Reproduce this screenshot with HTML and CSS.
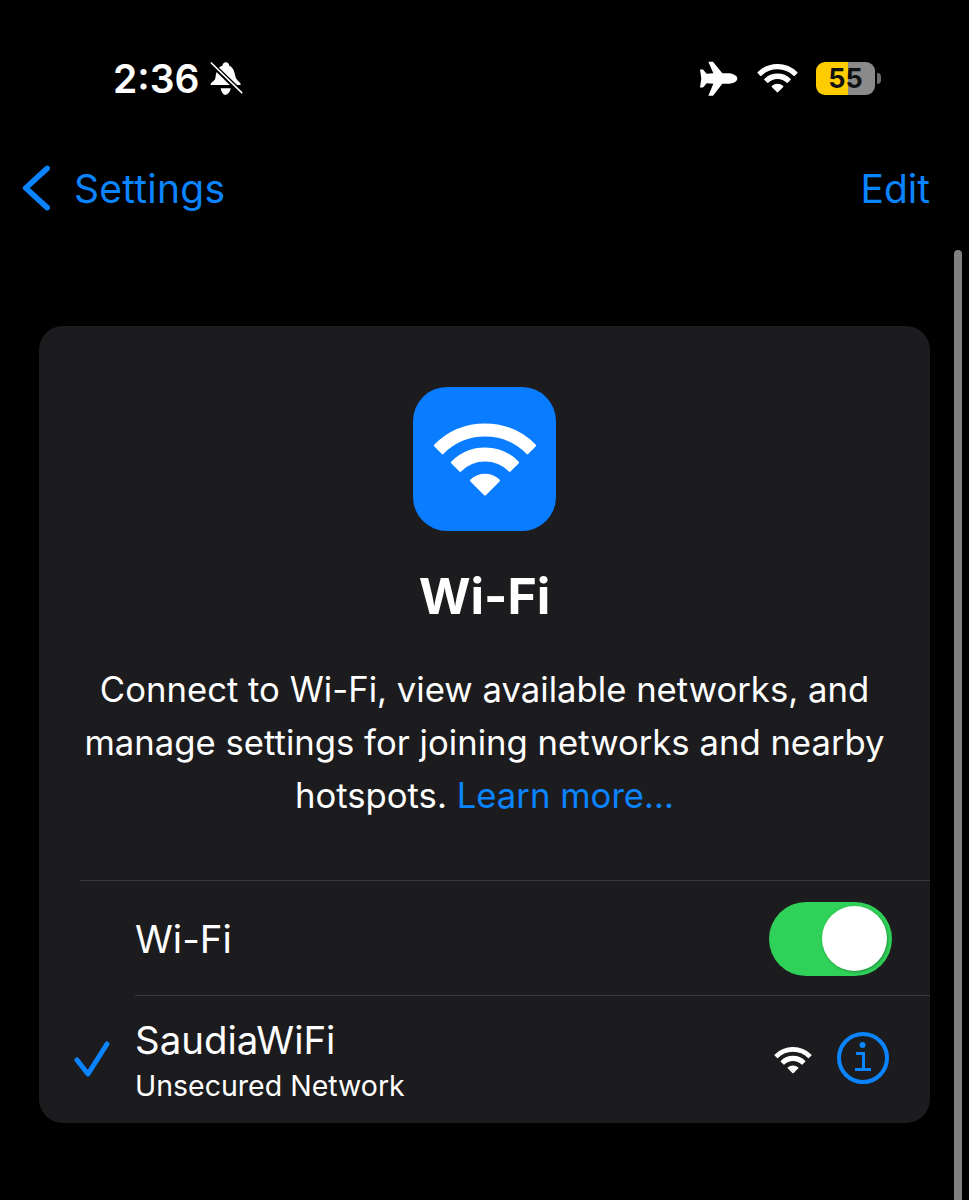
FILE: index.html
```html
<!DOCTYPE html>
<html lang="en">

<head>
  <meta charset="UTF-8">
  <meta name="viewport" content="width=device-width, initial-scale=1.0">
  <title>Wi-Fi</title>
  <link rel="stylesheet" href="styles.css">
</head>

<body>
  <svg class="defs" width="0" height="0">
    <symbol id="wifi" viewBox="-52 -74 104 76">
      <g fill="currentColor" stroke="currentColor" stroke-width="3" stroke-linejoin="round">
        <path d="M-49.5 -49.5A70 70 0 0 1 49.5 -49.5L42.4 -42.4A60 60 0 0 0 -42.4 -42.4Z" />
        <path d="M-32.5 -32.5A46 46 0 0 1 32.5 -32.5L24.7 -24.7A35 35 0 0 0 -24.7 -24.7Z" />
        <path d="M0 -1L-13.5 -14.5A20 20 0 0 1 13.5 -14.5Z" />
      </g>
    </symbol>
  </svg>

  <div class="screen">
    <div class="status">
      <div class="status-left">
        <span class="time">2:36</span>
        <svg class="bell" viewBox="358 66 100 102">
          <path fill="#fff" d="M408 70C400 70 398 76 397 80C380 85 378 105 376 118C374 128 360 130 362 138L452 138C454 130 438 125 436 112C434 100 430 84 418 80C417 75 414 70 408 70Z" />
          <path fill="#fff" d="M392 148H422C420 162 410 168 406 168C400 168 394 160 392 148Z" />
          <path stroke="#000" stroke-width="15" d="M362 72L455 162" />
          <path stroke="#fff" stroke-width="5" stroke-linecap="round" d="M364 72L455 161" />
        </svg>
      </div>
      <div class="status-right">
        <svg class="plane" viewBox="60 64 120 104">
          <path fill="#fff" d="M175 116C175 106 160 100 145 100L130 100L102 66L88 66L103 100L83 102L72 89L63 89L67 116L63 143L72 143L83 130L103 132L88 168L102 168L130 132L145 132C160 132 175 126 175 116Z" />
        </svg>
        <svg class="wifi-status"><use href="#wifi" /></svg>
        <div class="battery">55</div>
      </div>
    </div>

    <div class="nav">
      <a class="back" href="#">
        <svg class="chevron" viewBox="0 0 30 48">
          <path d="M27 3L4 24L27 45" />
        </svg>
        <span>Settings</span>
      </a>
      <a class="edit" href="#">Edit</a>
    </div>

    <div class="card">
      <div class="hero">
        <div class="app-icon">
          <svg class="wifi-big"><use href="#wifi" /></svg>
        </div>
        <h1>Wi-Fi</h1>
        <p>Connect to Wi-Fi, view available networks, and manage settings for joining networks and nearby<br>
          <span>hotspots.</span> <a href="#">Learn more...</a></p>
      </div>

      <div class="divider"></div>

      <div class="row row-toggle">
        <div class="mark"></div>
        <div class="row-body">
          <span class="label">Wi-Fi</span>
          <div class="switch"><div class="knob"></div></div>
        </div>
      </div>

      <div class="row row-network">
        <div class="mark">
          <svg class="check" viewBox="0 0 38 36">
            <path d="M3 19L14 33L33 3" />
          </svg>
        </div>
        <div class="row-body">
          <div class="network">
            <span class="label">SaudiaWiFi</span>
            <span class="sub">Unsecured Network</span>
          </div>
          <div class="accessories">
            <svg class="wifi-small"><use href="#wifi" /></svg>
            <svg class="info" viewBox="0 0 54 54">
              <circle cx="27" cy="27" r="24" />
              <circle class="dot" cx="26.5" cy="14" r="3" />
              <path class="stem" d="M20 22.5H27.5V38.5M19 38.5H35" />
            </svg>
          </div>
        </div>
      </div>
    </div>

    <div class="scrollbar"></div>
  </div>
</body>

</html>
```

FILE: styles.css
```css
* {
  box-sizing: border-box;
}

h1,
p {
  padding: 0;
  margin: 0;
}

a {
  color: #0a84ff;
  text-decoration: none;
}

body {
  margin: 0;
  background: #000;
  color: #fff;
  font-family: Inter, "Liberation Sans", sans-serif;
}

.defs {
  position: absolute;
}

.screen {
  position: relative;
  height: 1200px;
  overflow: hidden;
}

/* status bar */
.status {
  height: 156px;
  padding: 0 88px 0 113px;
  display: flex;
  align-items: center;
  justify-content: space-between;
}

.status-left {
  display: flex;
  align-items: center;
  gap: 9px;
}

.time {
  font-size: 39px;
  font-weight: 600;
}

.bell {
  width: 34px;
  height: 34px;
}

.status-right {
  display: flex;
  align-items: center;
}

.plane {
  width: 40px;
  height: 35px;
}

.wifi-status {
  width: 41px;
  height: 30px;
  margin-left: 18px;
  color: #fff;
}

.battery {
  position: relative;
  width: 59px;
  height: 33px;
  margin-left: 18px;
  margin-right: 6px;
  border-radius: 9px;
  background: linear-gradient(to right, #ffcc00 55%, #8a8a8a 55%);
  color: #111;
  font-size: 27px;
  font-weight: 700;
  line-height: 33px;
  text-align: center;
}

.battery::after {
  content: "";
  position: absolute;
  top: 11px;
  right: -6px;
  width: 4px;
  height: 11px;
  border-radius: 0 5px 5px 0;
  background: #6e6e6e;
}

/* nav */
.nav {
  height: 66px;
  padding: 0 39px 2px 22px;
  display: flex;
  align-items: center;
  justify-content: space-between;
  font-size: 39px;
}

.back {
  display: flex;
  align-items: center;
  gap: 24px;
}

.back span {
  letter-spacing: 0.25px;
}

.chevron {
  width: 28px;
  height: 46px;
  fill: none;
  stroke: #0a84ff;
  stroke-width: 6;
  stroke-linecap: round;
  stroke-linejoin: round;
}

/* card */
.card {
  margin: 104px 39px 0;
  height: 797px;
  background: #1c1c1e;
  border-radius: 24px;
  overflow: hidden;
}

.hero {
  padding: 61px 40px 0;
  height: 554px;
  display: flex;
  flex-direction: column;
  align-items: center;
}

.app-icon {
  width: 143px;
  height: 144px;
  border-radius: 34px;
  background: #0a7cff;
  display: flex;
  align-items: center;
  justify-content: center;
}

.wifi-big {
  width: 104px;
  height: 76px;
  color: #fff;
}

h1 {
  margin-top: 33px;
  font-size: 50px;
  font-weight: 700;
  line-height: 64px;
}

.hero p {
  margin-top: 35px;
  font-size: 34.7px;
  line-height: 53px;
  text-align: center;
}

.divider {
  height: 1px;
  margin-left: 41px;
  background: #3a3a3c;
}

.row {
  display: flex;
  padding-left: 35px;
}

.mark {
  width: 61px;
  flex: none;
  display: flex;
  align-items: center;
}

.row-body {
  flex: 1;
  padding-right: 38px;
  display: flex;
  align-items: center;
  justify-content: space-between;
}

.row-toggle {
  height: 114px;
}

.row-toggle .row-body {
  padding-top: 1px;
}

.row-network {
  height: 128px;
}

.row-network .row-body {
  border-top: 1px solid #3a3a3c;
}

.label {
  font-size: 38.4px;
}

.switch {
  width: 123px;
  height: 74px;
  padding-right: 5px;
  border-radius: 37px;
  background: #30d158;
  display: flex;
  align-items: center;
  justify-content: flex-end;
}

.knob {
  width: 65px;
  height: 65px;
  border-radius: 50%;
  background: #fff;
  box-shadow: 1px 1px 3px rgba(0, 0, 0, 0.3);
}

.check {
  width: 38px;
  height: 36px;
  fill: none;
  stroke: #0a84ff;
  stroke-width: 5;
  stroke-linecap: round;
  stroke-linejoin: round;
}

.network {
  display: flex;
  flex-direction: column;
  padding-top: 7px;
}

.network .label {
  line-height: 46px;
}

.sub {
  font-size: 28.5px;
  line-height: 46px;
}

.accessories {
  display: flex;
  align-items: center;
  gap: 24px;
  margin-right: 2px;
}

.wifi-small {
  width: 38px;
  height: 28px;
  color: #fff;
}

.info {
  width: 54px;
  height: 54px;
  margin-bottom: 3px;
  fill: none;
  stroke: #0a84ff;
  stroke-width: 4;
}

.info .dot {
  fill: #0a84ff;
  stroke: none;
}

.info .stem {
  stroke-width: 3;
}

.scrollbar {
  position: absolute;
  top: 250px;
  left: 954px;
  bottom: 0;
  width: 8px;
  border-radius: 4px 4px 0 0;
  background: #808080;
}
```
